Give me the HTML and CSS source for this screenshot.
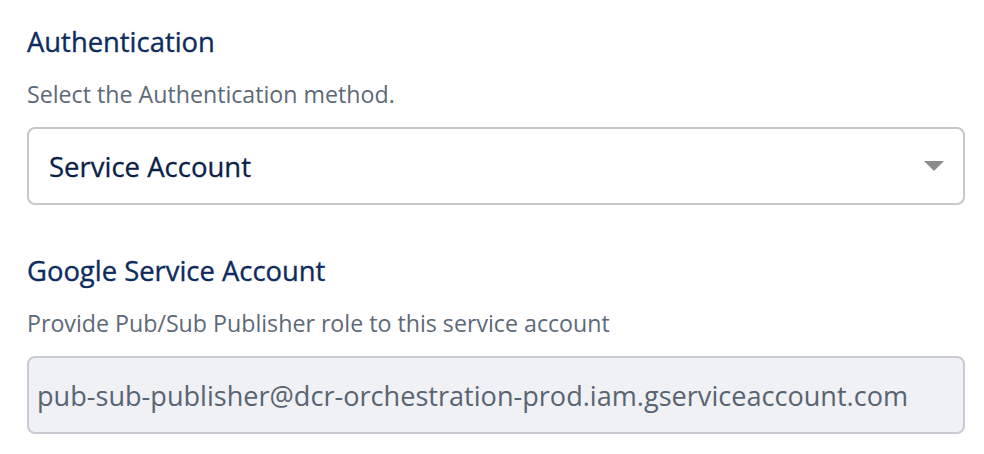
FILE: index.html
```html
<!DOCTYPE html>
<html>
<head>
<meta charset="utf-8">
<link rel="stylesheet" href="styles.css">
</head>
<body>
<div class="form">
  <section class="field">
    <h2 class="label">Authentication</h2>
    <p class="help">Select the Authentication method.</p>
    <div class="select">
      <span class="select-value">Service Account</span>
      <span class="caret"></span>
    </div>
  </section>
  <section class="field">
    <h2 class="label">Google Service Account</h2>
    <p class="help">Provide Pub/Sub Publisher role to this service account</p>
    <div class="input readonly">pub-sub-publisher@dcr-orchestration-prod.iam.gserviceaccount.com</div>
  </section>
</div>
</body>
</html>
```
FILE: styles.css
```css
html, body {
  margin: 0;
  padding: 0;
  background: #ffffff;
}
body {
  font-family: "Open Sans", "Noto Sans", sans-serif;
}
.form {
  padding: 24px 19px 0 27px;
  display: flex;
  flex-direction: column;
  gap: 48px;
}
.field {
  display: flex;
  flex-direction: column;
}
.label {
  margin: 0;
  font-size: 27.4px;
  line-height: 36px;
  font-weight: 500;
  color: #0d2b5e;
  -webkit-text-stroke: 0.35px #0d2b5e;
  white-space: nowrap;
}
.help {
  margin: 19px 0 18px;
  font-size: 23.2px;
  line-height: 30px;
  color: #5d6977;
  white-space: nowrap;
}
.select {
  box-sizing: border-box;
  height: 78px;
  border: 2px solid #c6c7ca;
  border-radius: 8px;
  display: flex;
  align-items: center;
  justify-content: space-between;
  padding: 0 19px 0 20px;
}
.select-value {
  font-size: 27.5px;
  color: #0b1f47;
  font-weight: 500;
  -webkit-text-stroke: 0.3px #0b1f47;
  white-space: nowrap;
}
.caret {
  width: 0;
  height: 0;
  border-left: 10px solid transparent;
  border-right: 10px solid transparent;
  border-top: 10px solid #8c8c8c;
}
.input {
  box-sizing: border-box;
  height: 78px;
  border: 2px solid #c8ccd1;
  border-radius: 8px;
  display: flex;
  align-items: center;
  padding: 0 8px;
  font-size: 27.1px;
  color: #596472;
  white-space: nowrap;
}
.readonly {
  background: #eff1f4;
}
```
